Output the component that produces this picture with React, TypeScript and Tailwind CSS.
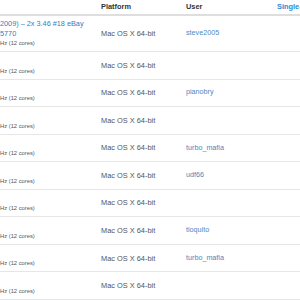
const rows: { title?: string[]; user?: string }[] = [
  { title: ['2009) – 2x 3.46 #18 eBay', '5770'], user: 'steve2005' },
  {},
  { user: 'pianobry' },
  {},
  { user: 'turbo_mafia' },
  { user: 'udf66' },
  {},
  { user: 'tioquito' },
  { user: 'turbo_mafia' },
  {},
];

export default function App() {
  return (
    <div className="w-[300px] h-[300px] overflow-hidden bg-white font-['Liberation_Sans',Arial,sans-serif]">
      {/* header */}
      <div className="flex h-[16px] border-b-2 border-[#dedede] text-[7.4px] font-bold text-[#333] leading-[13px]">
        <div className="w-[101px] shrink-0" />
        <div className="w-[85px] shrink-0">Platform</div>
        <div className="w-[91px] shrink-0">User</div>
        <div className="whitespace-nowrap text-[#2f8ad4]">Single-Core</div>
      </div>

      {rows.map((row, i) => (
        <div
          key={i}
          className={`flex items-center border-b border-[#e6e6e6] ${i === 0 ? 'h-[36px]' : 'h-[27.55px]'}`}
        >
          <div className="w-[101px] shrink-0 self-stretch flex flex-col justify-end pb-[3px] whitespace-nowrap">
            {row.title && (
              <div className="text-[7.3px] leading-[10px] text-[#2f7fbf]">
                {row.title.map((t) => (
                  <div key={t}>{t}</div>
                ))}
              </div>
            )}
            <div className="text-[5.8px] leading-[9px] text-[#555]">Hz (12 cores)</div>
          </div>
          <div className="w-[85px] shrink-0 text-[7.4px] text-[#555] whitespace-nowrap">Mac OS X 64-bit</div>
          <div className="w-[91px] shrink-0 text-[7.2px] text-[#4a88c2] whitespace-nowrap">{row.user}</div>
        </div>
      ))}
    </div>
  );
}
